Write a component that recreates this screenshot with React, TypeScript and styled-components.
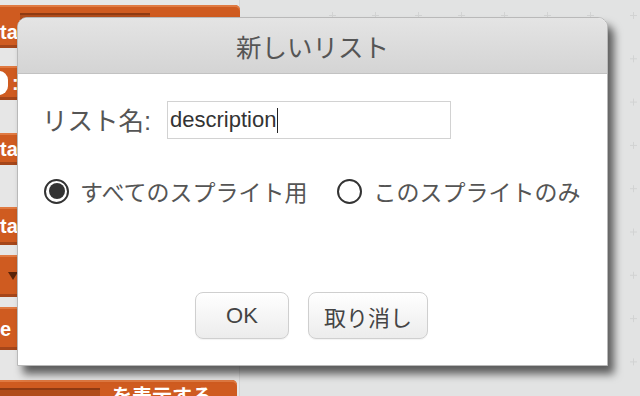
import React from "react";
import styled, { createGlobalStyle } from "styled-components";

const Global = createGlobalStyle`
  html, body { margin: 0; padding: 0; }
  body { width: 640px; height: 396px; overflow: hidden; font-family: "Liberation Sans", "Noto Sans CJK JP", sans-serif; }
`;

const JP = `"Liberation Sans", "Noto Sans CJK JP", sans-serif`;

const Page = styled.div`
  position: relative;
  width: 640px;
  height: 396px;
  overflow: hidden;
  display: grid;
  grid-template-columns: 240px 1fr;
  background: #e2e3e3;
`;

const Palette = styled.div`
  background: #e6e6e6;
  display: flex;
  flex-direction: column;
  align-items: flex-start;
  border-right: 1px solid #d6d6d6;
`;

const Block = styled.div<{ $top: number; $h: number; $w?: number }>`
  margin-top: ${(p) => p.$top}px;
  height: ${(p) => p.$h}px;
  width: ${(p) => p.$w ?? 60}px;
  flex: none;
  box-sizing: border-box;
  background: #cf5b20;
  border-radius: 0 5px 5px 0;
  box-shadow: inset 0 2px 0 #e07a42, inset 0 -3px 0 #a5461a;
  display: flex;
  align-items: center;
  color: #fff;
  font-family: ${JP};
  font-size: 20px;
  font-weight: bold;
  overflow: hidden;
`;

const BlockText = styled.span<{ $ml?: number; $mt?: number }>`
  margin-left: ${(p) => p.$ml ?? 0}px;
  margin-top: ${(p) => p.$mt ?? 0}px;
  white-space: nowrap;
  line-height: 1;
`;

const Slot = styled.div<{ $w: number; $ml: number }>`
  width: ${(p) => p.$w}px;
  margin-left: ${(p) => p.$ml}px;
  align-self: flex-start;
  margin-top: 8px;
  height: 30px;
  background: #b04c1b;
  border-top: 2px solid #8e3a12;
  flex: none;
`;

const RoundInput = styled.div`
  width: 18px;
  height: 24px;
  border-radius: 12px;
  background: #fff;
  margin-left: -10px;
  flex: none;
`;

const DropArrow = styled.div`
  width: 0;
  height: 0;
  border-left: 5px solid transparent;
  border-right: 5px solid transparent;
  border-top: 8px solid #5a2308;
  margin-left: 8px;
`;

const Canvas = styled.div`
  overflow: hidden;
`;

const GridSvg = styled.svg`
  display: block;
  width: 400px;
  height: 396px;
`;

const Dialog = styled.div`
  position: absolute;
  left: 17px;
  top: 17px;
  width: 591px;
  height: 349px;
  box-sizing: border-box;
  background: #fff;
  border: 1px solid #b9b9b9;
  border-radius: 10px 10px 0 0;
  box-shadow: 6px 8px 9px rgba(0, 0, 0, 0.6);
  display: flex;
  flex-direction: column;
  font-family: ${JP};
`;

const Header = styled.div`
  height: 56px;
  flex: none;
  box-sizing: border-box;
  border-radius: 9px 9px 0 0;
  background: linear-gradient(#e4e4e4, #d4d4d4);
  border-bottom: 1px solid #c2c2c2;
  display: flex;
  align-items: center;
  justify-content: center;
  color: #555;
  font-size: 25.5px;
`;

const Body = styled.div`
  flex: 1;
  display: flex;
  flex-direction: column;
  padding: 27px 0 26px 25px;
`;

const NameRow = styled.div`
  display: flex;
  align-items: center;
  height: 38px;
`;

const Label = styled.span`
  color: #555;
  font-size: 25.5px;
  width: 125px;
  flex: none;
  margin-top: -4px;
  margin-left: -1px;
`;

const NameField = styled.div`
  width: 284px;
  height: 38px;
  box-sizing: border-box;
  border: 1px solid #d2d2d2;
  display: flex;
  align-items: center;
  padding-left: 2px;
  color: #333;
  font-family: "Liberation Sans", sans-serif;
  font-size: 22px;
`;

const Caret = styled.span`
  display: inline-block;
  width: 1px;
  height: 25px;
  background: #222;
  margin-left: 1px;
`;

const RadioRow = styled.div`
  display: flex;
  align-items: center;
  height: 30px;
  margin-top: 37px;
  gap: 29px;
`;

const RadioOption = styled.div`
  display: flex;
  align-items: center;
  gap: 11px;
  margin-left: 1px;
  color: #555;
  font-size: 23px;
`;

const RadioDot = styled.span<{ $checked?: boolean }>`
  width: 25px;
  height: 25px;
  box-sizing: border-box;
  border-radius: 50%;
  border: 2px solid #333;
  display: flex;
  align-items: center;
  justify-content: center;
  flex: none;
  &::after {
    content: "";
    width: 16px;
    height: 16px;
    border-radius: 50%;
    background: ${(p) => (p.$checked ? "#333" : "transparent")};
  }
`;

const ButtonRow = styled.div`
  margin-top: auto;
  display: flex;
  justify-content: center;
  gap: 19px;
  margin-left: -25px;
  margin-right: 2px;
`;

const Button = styled.button`
  height: 47px;
  min-width: 94px;
  padding: 0 15px;
  box-sizing: border-box;
  border: 1px solid #cfcfcf;
  border-radius: 8px;
  background: linear-gradient(#ffffff, #ececec);
  color: #444;
  font-family: ${JP};
  font-size: 22px;
  box-shadow: 0 1px 1px rgba(0, 0, 0, 0.05);
`;

const plusXs = Array.from({ length: 10 }, (_, i) => 92 + 43 * i);
const plusYs = Array.from({ length: 10 }, (_, i) => 15 + 43.3 * i);

export default function App() {
  return (
    <Page>
      <Global />
      <Palette>
        <Block $top={5} $h={43} $w={240}>
          <BlockText $mt={10}>ta</BlockText>
          <Slot $w={130} $ml={2} />
        </Block>
        <Block $top={18} $h={34}>
          <RoundInput />
          <BlockText $ml={4}>:</BlockText>
        </Block>
        <Block $top={33} $h={32}>
          <BlockText>ta</BlockText>
        </Block>
        <Block $top={42} $h={38}>
          <BlockText>ta</BlockText>
        </Block>
        <Block $top={10} $h={42}>
          <DropArrow />
        </Block>
        <Block $top={10} $h={43}>
          <BlockText>e</BlockText>
        </Block>
        <Block $top={30} $h={30} $w={237}>
          <Slot $w={100} $ml={0} />
          <BlockText $ml={12} $mt={4}>を表示する</BlockText>
        </Block>
      </Palette>
      <Canvas>
        <GridSvg viewBox="0 0 400 396">
          {plusYs.map((y) =>
            plusXs.map((x) => (
              <g key={`${x}-${y}`} stroke="#d2d3d3" strokeWidth="1">
                <line x1={x - 3} y1={y + 0.5} x2={x + 4} y2={y + 0.5} />
                <line x1={x + 0.5} y1={y - 3} x2={x + 0.5} y2={y + 4} />
              </g>
            ))
          )}
        </GridSvg>
      </Canvas>
      <Dialog>
        <Header>新しいリスト</Header>
        <Body>
          <NameRow>
            <Label>リスト名:</Label>
            <NameField>
              description
              <Caret />
            </NameField>
          </NameRow>
          <RadioRow>
            <RadioOption>
              <RadioDot $checked />
              すべてのスプライト用
            </RadioOption>
            <RadioOption>
              <RadioDot />
              このスプライトのみ
            </RadioOption>
          </RadioRow>
          <ButtonRow>
            <Button>OK</Button>
            <Button>取り消し</Button>
          </ButtonRow>
        </Body>
      </Dialog>
    </Page>
  );
}
